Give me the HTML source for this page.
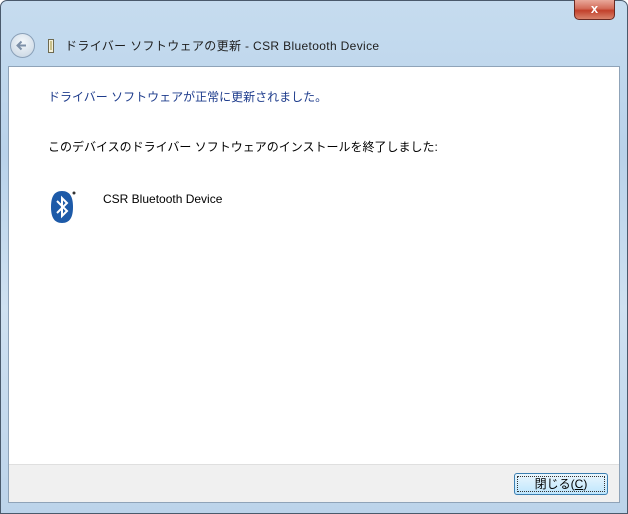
<!DOCTYPE html>
<html><head><meta charset="utf-8"><style>
*{margin:0;padding:0;box-sizing:border-box}
body{width:628px;height:514px;overflow:hidden;font-family:"Liberation Sans","Noto Sans CJK JP",sans-serif;background:#fff}
.frame{position:absolute;left:0;top:0;width:628px;height:514px;border-radius:7px 7px 0 0;border:1px solid #4a5a6c;
background:linear-gradient(180deg,#c6dcef 0%,#b9d2ea 30%,#cfe1f1 60%,#bcd3ea 100%)}
.close{position:absolute;left:574px;top:0;width:41px;height:20px;border:1px solid #6b2a22;border-top:none;border-radius:0 0 5px 5px;
background:linear-gradient(180deg,#e9a99b 0%,#d36b58 45%,#c2402b 55%,#d9836c 100%);color:#fff;font-size:13px;font-weight:bold;text-align:center;line-height:18px}
.back{position:absolute;left:10px;top:33px;width:25px;height:25px;border-radius:50%;border:1px solid #8aa0b8;background:radial-gradient(circle at 50% 35%,#f4f8fb,#c5d3e1)}
.title{position:absolute;left:65px;top:37px;font-size:12px;color:#1e1e1e;letter-spacing:0.35px}
.content{position:absolute;left:8px;top:66px;width:612px;height:437px;background:#fff;border:1px solid #8fa3b8}
.footer{position:absolute;left:0;bottom:0;width:610px;height:38px;background:#f0f0f0;border-top:1px solid #dfdfdf}
.btn{position:absolute;left:505px;top:8px;width:94px;height:22px;border:1px solid #3c7fb1;border-radius:3px;background:linear-gradient(180deg,#eaf6fd,#bee6fd);font-size:12px;text-align:center;line-height:20px;color:#000;outline:1px dotted #333;outline-offset:-4px}
.h{position:absolute;left:39px;top:21px;font-size:12px;color:#1e3c8c}
.t{position:absolute;left:39px;top:71px;font-size:12px;color:#000}
.d{position:absolute;left:94px;top:125px;font-size:12px;color:#000}
</style></head><body>
<div class="frame"></div>
<div class="close">x</div>
<div class="back"><svg width="23" height="23" viewBox="0 0 23 23"><path d="M15 11.5H7M10.5 7.5l-4 4 4 4" stroke="#7d90a8" stroke-width="2" fill="none"/></svg></div>
<svg style="position:absolute;left:47px;top:38px" width="8" height="16"><rect x="1.5" y="1.5" width="5" height="13" fill="#f4f1dc" stroke="#6e6a50"/><rect x="3" y="3" width="2" height="9" fill="#c9c08a"/></svg>
<div class="title">ドライバー ソフトウェアの更新 - CSR Bluetooth Device</div>
<div class="content">
<div class="h">ドライバー ソフトウェアが正常に更新されました。</div>
<div class="t">このデバイスのドライバー ソフトウェアのインストールを終了しました:</div>
<svg style="position:absolute;left:40px;top:123px" width="28" height="34" viewBox="0 0 28 34"><path d="M13 1C5 1 2 7 2 17s3 16 11 16 11-6 11-16S21 1 13 1z" fill="#1d5aa8"/><path d="M8 11l10 10-5 5V8l5 5-10 10" stroke="#fff" stroke-width="2" fill="none"/><circle cx="25" cy="3" r="1.5" fill="#333"/></svg>
<div class="d">CSR Bluetooth Device</div>
<div class="footer"><div class="btn">閉じる(<u>C</u>)</div></div>
</div>
</body></html>
